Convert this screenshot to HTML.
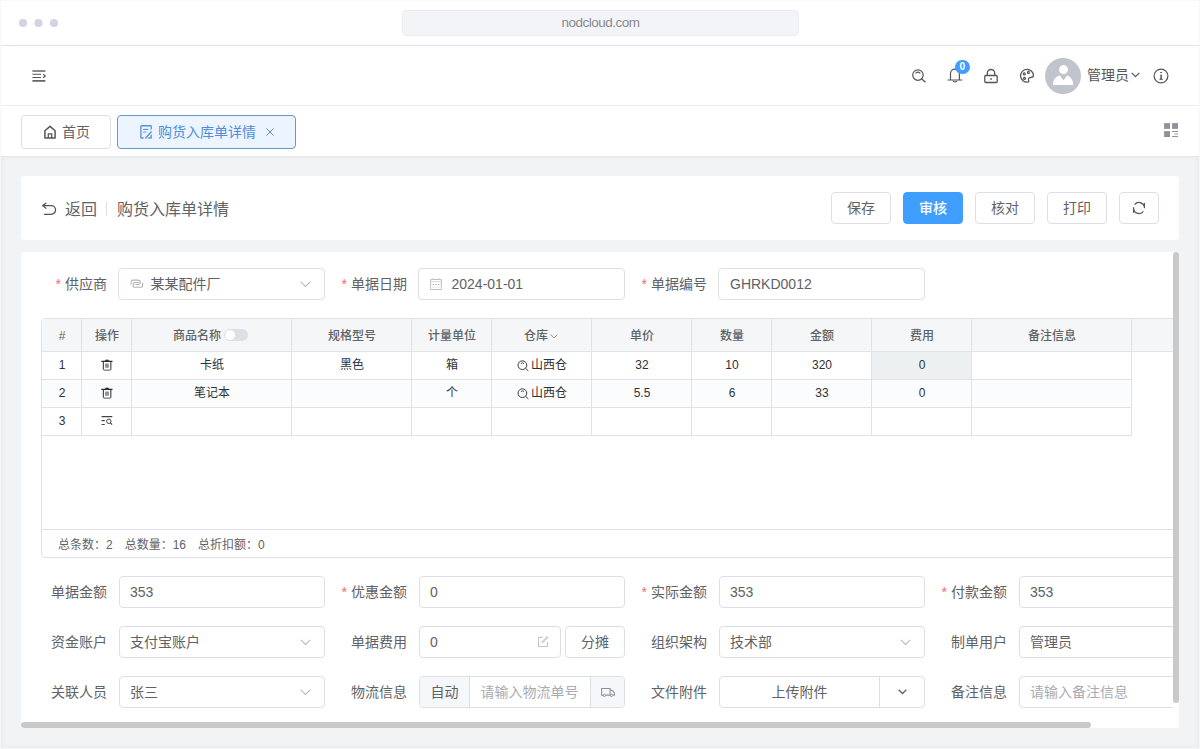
<!DOCTYPE html>
<html lang="zh-CN">
<head>
<meta charset="utf-8">
<title>nodcloud</title>
<style>
*{box-sizing:border-box;margin:0;padding:0}
html,body{width:1200px;height:749px;overflow:hidden}
body{font-family:"Liberation Sans","Noto Sans CJK SC",sans-serif;font-size:14px;color:#606266;background:#f1f3f5;position:relative}
.abs{position:absolute}
#chrome{left:0;top:0;width:1200px;height:46px;background:#fff;border-bottom:1px solid #dfe2e8}
.dot{position:absolute;top:18.8px;width:8.4px;height:8.4px;border-radius:50%;background:#d3d4e3}
#url{left:402px;top:10px;width:397px;height:26px;background:#f2f4f8;border:1px solid #eceef3;border-radius:4px;text-align:center;line-height:24px;font-size:13.5px;letter-spacing:-0.5px;color:#8a8a8a}
#header{left:0;top:46px;width:1200px;height:60px;background:#fff;border-bottom:1px solid #ebeef5}
#tabs{left:0;top:106px;width:1200px;height:50px;background:#fff;box-shadow:0 1px 2px rgba(0,21,41,.03)}
.tab{position:absolute;top:9px;height:34px;border:1px solid #dcdfe6;border-radius:4px;font-size:14px;line-height:32px;color:#606266;background:#fff;white-space:nowrap}
.tab.on{border-color:#6a97cb;background:#ecf4ff;color:#4f8ddb}
.card{position:absolute;background:#fff;border-radius:4px}
.btn{position:absolute;height:32px;width:60px;border:1px solid #dcdfe6;border-radius:4px;background:#fff;color:#606266;font-size:14px;line-height:30px;text-align:center;white-space:nowrap}
.btn.pri{background:#409eff;border-color:#409eff;color:#fff;font-weight:500}
.lbl{position:absolute;height:32px;line-height:32px;font-size:14px;color:#606266;text-align:right;white-space:nowrap}
.lbl i{color:#f56c6c;font-style:normal;margin-right:4px}
.inp{position:absolute;height:32px;border:1px solid #dcdfe6;border-radius:4px;background:#fff;font-size:14px;color:#606266;line-height:30px;padding-left:11px;white-space:nowrap;overflow:hidden}
.ph{color:#a8abb2}
svg{display:block;overflow:visible}
.th,.td{position:absolute;border-right:1px solid #dfe2e6;border-bottom:1px solid #dfe2e6;text-align:center;font-size:12px;white-space:nowrap}
.th{height:33px;line-height:35px;color:#606266;font-weight:500;background:#f4f6f7;padding-left:1px}
.td{height:28px;line-height:27px;color:#303133;padding-left:1px}
</style>
</head>
<body>
<div id="chrome" class="abs">
<svg class="abs" style="left:0;top:0" width="80" height="46" viewBox="0 0 80 46"><circle cx="23" cy="23" r="4.1" fill="#d3d4e3"/><circle cx="38.5" cy="23" r="4.1" fill="#d3d4e3"/><circle cx="54" cy="23" r="4.1" fill="#d3d4e3"/></svg>
<div id="url" class="abs">nodcloud.com</div>
</div>
<div id="header" class="abs">
<svg class="abs" style="left:32px;top:24px" width="14" height="12" viewBox="0 0 14 12" fill="none" ><path d="M0.4 1H13.4M0.4 10.95H13.4" stroke="#63666b" stroke-width="1.7"/><path d="M0.4 4.3H9M0.4 7.45H9" stroke="#555" stroke-width="1.1"/><path d="M11 4.1L13.3 5.9L11 7.7" stroke="#555" stroke-width="1.2"/></svg>
<svg class="abs" style="left:911px;top:22px" width="16" height="16" viewBox="0 0 16 16" fill="none" ><circle cx="6.95" cy="7.05" r="5.25" stroke="#555" stroke-width="1.2"/><path d="M10.8 10.9L14.2 13.9" stroke="#555" stroke-width="1.3" stroke-linecap="round"/><path d="M4.9 5.2A2.9 2.9 0 0 1 9 5.2" stroke="#555" stroke-width="1.1" stroke-linecap="round"/></svg>
<svg class="abs" style="left:947px;top:21.5px" width="16" height="16" viewBox="0 0 16 16" fill="none" ><path d="M3.5 12V5.5A4.45 4.45 0 0 1 12.4 5.5V12" stroke="#555" stroke-width="1.2"/><path d="M1 12H14.9" stroke="#555" stroke-width="1.1" stroke-linecap="round"/><path d="M6.2 13.1Q8 14.9 9.8 13.1" stroke="#555" stroke-width="1.1" stroke-linecap="round"/></svg>
<span class="abs" style="left:955px;top:13.700000000000003px;width:14.6px;height:14.6px;border-radius:50%;background:#409eff;color:#fff;font-size:10px;font-weight:bold;line-height:14.6px;text-align:center">0</span>
<svg class="abs" style="left:983px;top:21.5px" width="16" height="16" viewBox="0 0 16 16" fill="none" ><rect x="1.8" y="7.5" width="12.4" height="7" rx="0.9" stroke="#555" stroke-width="1.3"/><path d="M4.3 7.5V5.2A3.7 3.7 0 0 1 11.7 5.2V7.5" stroke="#555" stroke-width="1.3"/><path d="M8 10V12" stroke="#555" stroke-width="1.3"/></svg>
<svg class="abs" style="left:1019px;top:22px" width="16" height="16" viewBox="0 0 16 16" fill="none" ><path d="M8.9 14.15A6.45 6.45 0 1 1 14.45 7.7C14.6 9.1 12.6 9.2 11 9.6C9.6 9.95 9.2 11 9.6 12.3C9.9 13.3 9.7 14 8.9 14.15Z" stroke="#555" stroke-width="1.25" stroke-linejoin="round"/><circle cx="5.3" cy="5.9" r="1" stroke="#555" stroke-width="1.1"/><circle cx="9.4" cy="4.4" r="1" stroke="#555" stroke-width="1.1"/><circle cx="5.5" cy="10.4" r="1" stroke="#555" stroke-width="1.1"/></svg>
<span class="abs" style="left:1045px;top:12px;width:36px;height:36px;border-radius:50%;background:#c0c4cc"></span>
<svg class="abs" style="left:1045px;top:12px" width="36" height="36" viewBox="0 0 36 36" fill="none" ><circle cx="18.5" cy="11.6" r="4.5" fill="#fff"/><path d="M8 27C8 22 10.5 18.5 14.8 17.5L18.5 22.4L22 17.5C25.7 18.5 28.2 22 28.2 27Z" fill="#fff"/></svg>
<span class="abs" style="left:1087px;top:18px;font-size:14px;line-height:22px;color:#555">管理员</span>
<svg class="abs" style="left:1131.3px;top:26.200000000000003px" width="9" height="6" viewBox="0 0 9 6" fill="none" ><path d="M0.7 0.9L4.5 4.6L8.3 0.9" stroke="#555" stroke-width="1.2"/></svg>
<svg class="abs" style="left:1153px;top:21.799999999999997px" width="16" height="16" viewBox="0 0 16 16" fill="none" ><circle cx="8" cy="8" r="6.9" stroke="#555" stroke-width="1.2"/><path d="M7.2 4.5H9" stroke="#555" stroke-width="1"/><path d="M8.1 6.4V11.2" stroke="#555" stroke-width="1.5"/><path d="M6.5 11.3H9.7" stroke="#555" stroke-width="1.1"/></svg>
</div>
<div class="card" style="left:21px;top:176px;width:1158px;height:64px">
<svg class="abs" style="left:21px;top:27px" width="15" height="13" viewBox="0 0 15 13" fill="none" ><path d="M3.9 0.2L0.8 2.6L3.9 5.2" stroke="#555" stroke-width="1.3" stroke-linecap="round"/><path d="M0.9 2.6H9.2A4.35 4.35 0 0 1 9.2 11.3H2.4" stroke="#555" stroke-width="1.3" stroke-linecap="round"/></svg>
<span class="abs" style="left:44px;top:22px;font-size:16px;line-height:24px">返回</span>
<span class="abs" style="left:85px;top:25.5px;width:1px;height:14px;background:#dcdfe6"></span>
<span class="abs" style="left:96px;top:22px;font-size:16px;line-height:24px">购货入库单详情</span>
<div class="btn" style="left:810px;top:16px">保存</div>
<div class="btn pri" style="left:882px;top:16px">审核</div>
<div class="btn" style="left:954px;top:16px">核对</div>
<div class="btn" style="left:1026px;top:16px">打印</div>
<div class="btn" style="left:1098px;top:16px;width:40px"><svg class="abs" style="left:12px;top:8px" width="14" height="14" viewBox="0 0 14 14" fill="none" ><path d="M2.6 3.6A5.6 5.6 0 0 1 12.4 5.6" stroke="#555" stroke-width="1.2"/><path d="M12.4 1.9V7.3" stroke="#555" stroke-width="1.2"/><path d="M11.4 10.4A5.6 5.6 0 0 1 1.6 8.4" stroke="#555" stroke-width="1.2"/><path d="M1.6 6.3V11.8" stroke="#555" stroke-width="1.2"/></svg></div>
</div>
<div class="card" style="left:21px;top:252px;width:1158px;height:476px;overflow:hidden;border-radius:4px 0 0 3px">
<div class="lbl" style="right:1072px;top:16px"><i>*</i>供应商</div>
<div class="inp" style="left:97px;top:16px;width:207px;padding-left:11px;"><svg class="abs" style="left:11px;top:10px" width="14" height="10" viewBox="0 0 14 10" fill="none" ><path d="M1.1 5.5V3.1A2 2 0 0 1 3.1 1.1H8A2.2 2.2 0 0 1 8 5.5H5.5" stroke="#b1b4bb" stroke-width="1.1"/><path d="M12.7 4V6.3A2 2 0 0 1 10.7 8.3H5.4A2.4 2.4 0 0 1 5.4 3.5H8.7" stroke="#b1b4bb" stroke-width="1.1"/></svg><span class="abs" style="left:31.5px">某某配件厂</span><svg class="abs" style="right:13.2px;top:11.8px" width="11" height="6" viewBox="0 0 11 6" fill="none" ><path d="M0.8 0.8L5.5 5.4L10.2 0.8" stroke="#b7babf" stroke-width="1.1"/></svg></div>
<div class="lbl" style="right:772px;top:16px"><i>*</i>单据日期</div>
<div class="inp" style="left:397px;top:16px;width:207px;padding-left:11px;"><svg class="abs" style="left:11px;top:8px" width="12" height="13" viewBox="0 0 12 13" fill="none" ><rect x="0.6" y="2.5" width="10.8" height="10" rx="0.3" stroke="#bcbfc6" stroke-width="1"/><path d="M0.6 4.7H11.4" stroke="#d0d3d9" stroke-width="1"/><path d="M2.8 1.3V2.5M9.2 1.3V2.5" stroke="#c9ccd2" stroke-width="1.1"/><path d="M2.6 7.5H4M5.3 7.5H6.7M8 7.5H9.4" stroke="#b0b3ba" stroke-width="1"/><path d="M2.6 10.2H4M5.3 10.2H6.7M8 10.2H9.4" stroke="#d9dbe0" stroke-width="1"/></svg><span class="abs" style="left:32.5px">2024-01-01</span></div>
<div class="lbl" style="right:472px;top:16px"><i>*</i>单据编号</div>
<div class="inp" style="left:697px;top:16px;width:207px;padding-left:11px;">GHRKD0012</div>
<div class="abs" style="left:20px;top:66px;width:1200px;height:240px;border:1px solid #dfe2e6;border-radius:4px"></div>
<div class="abs" style="left:21px;top:67px;width:1200px;height:33px;background:#f4f6f7;border-bottom:1px solid #dfe2e6;border-top-left-radius:3px"></div>
<div class="th" style="left:21px;top:67px;width:40px">#</div>
<div class="th" style="left:61px;top:67px;width:50px">操作</div>
<div class="th" style="left:111px;top:67px;width:160px"><span style="position:relative;left:-15px">商品名称</span><span class="abs" style="left:92px;top:10px;width:24px;height:12px;border-radius:6px;background:#dcdfe6"><span class="abs" style="left:1px;top:1px;width:10px;height:10px;border-radius:50%;background:#fff"></span></span></div>
<div class="th" style="left:271px;top:67px;width:120px">规格型号</div>
<div class="th" style="left:391px;top:67px;width:80px">计量单位</div>
<div class="th" style="left:471px;top:67px;width:100px"><span style="position:relative;left:-6px">仓库</span><svg class="abs" style="left:58.3px;top:14.8px" width="8" height="5" viewBox="0 0 8 5" fill="none" ><path d="M0.6 0.6L4 3.8L7.4 0.6" stroke="#909399" stroke-width="1"/></svg></div>
<div class="th" style="left:571px;top:67px;width:100px">单价</div>
<div class="th" style="left:671px;top:67px;width:80px">数量</div>
<div class="th" style="left:751px;top:67px;width:100px">金额</div>
<div class="th" style="left:851px;top:67px;width:100px">费用</div>
<div class="th" style="left:951px;top:67px;width:160px">备注信息</div>
<div class="td" style="left:21px;top:100px;width:40px;">1</div>
<div class="td" style="left:61px;top:100px;width:50px;"><svg class="abs" style="left:19px;top:7px" width="12" height="12" viewBox="0 0 12 12" fill="none" ><path d="M0.3 2.4H11.5" stroke="#2b2b2b" stroke-width="1.2"/><path d="M4.4 2.2V1.5H7.6V2.2" stroke="#2b2b2b" stroke-width="1"/><path d="M4.6 0.6H7.4" stroke="#a0a0a0" stroke-width="0.9"/><path d="M2.35 2.6V10.4" stroke="#3a3a3a" stroke-width="1.1"/><path d="M9.85 2.6V10.4" stroke="#3a3a3a" stroke-width="1.1"/><path d="M2.35 10.2Q2.35 11.1 3.3 11.1H8.9Q9.85 11.1 9.85 10.2" stroke="#777" stroke-width="1.1"/><rect x="4.1" y="4.4" width="3.8" height="4.4" rx="0.4" fill="#909090"/></svg></div>
<div class="td" style="left:111px;top:100px;width:160px;">卡纸</div>
<div class="td" style="left:271px;top:100px;width:120px;">黑色</div>
<div class="td" style="left:391px;top:100px;width:80px;">箱</div>
<div class="td" style="left:471px;top:100px;width:100px;"><span style="position:relative;left:7px">山西仓</span><svg class="abs" style="left:24.5px;top:8px" width="12" height="12" viewBox="0 0 12 12" fill="none" ><circle cx="5.4" cy="5.2" r="4.35" stroke="#3a3a3a" stroke-width="1"/><path d="M8.5 8.3L11.3 10.8" stroke="#3a3a3a" stroke-width="1"/><path d="M3.8 3.6A2.4 2.4 0 0 1 7 3.5" stroke="#3a3a3a" stroke-width="0.9"/></svg></div>
<div class="td" style="left:571px;top:100px;width:100px;">32</div>
<div class="td" style="left:671px;top:100px;width:80px;">10</div>
<div class="td" style="left:751px;top:100px;width:100px;">320</div>
<div class="td" style="left:851px;top:100px;width:100px;background:#ecf0f1;">0</div>
<div class="td" style="left:951px;top:100px;width:160px;"></div>
<div class="td" style="left:21px;top:128px;width:40px;background:#fbfcfd;">2</div>
<div class="td" style="left:61px;top:128px;width:50px;background:#fbfcfd;"><svg class="abs" style="left:19px;top:7px" width="12" height="12" viewBox="0 0 12 12" fill="none" ><path d="M0.3 2.4H11.5" stroke="#2b2b2b" stroke-width="1.2"/><path d="M4.4 2.2V1.5H7.6V2.2" stroke="#2b2b2b" stroke-width="1"/><path d="M4.6 0.6H7.4" stroke="#a0a0a0" stroke-width="0.9"/><path d="M2.35 2.6V10.4" stroke="#3a3a3a" stroke-width="1.1"/><path d="M9.85 2.6V10.4" stroke="#3a3a3a" stroke-width="1.1"/><path d="M2.35 10.2Q2.35 11.1 3.3 11.1H8.9Q9.85 11.1 9.85 10.2" stroke="#777" stroke-width="1.1"/><rect x="4.1" y="4.4" width="3.8" height="4.4" rx="0.4" fill="#909090"/></svg></div>
<div class="td" style="left:111px;top:128px;width:160px;background:#fbfcfd;">笔记本</div>
<div class="td" style="left:271px;top:128px;width:120px;background:#fbfcfd;"></div>
<div class="td" style="left:391px;top:128px;width:80px;background:#fbfcfd;">个</div>
<div class="td" style="left:471px;top:128px;width:100px;background:#fbfcfd;"><span style="position:relative;left:7px">山西仓</span><svg class="abs" style="left:24.5px;top:8px" width="12" height="12" viewBox="0 0 12 12" fill="none" ><circle cx="5.4" cy="5.2" r="4.35" stroke="#3a3a3a" stroke-width="1"/><path d="M8.5 8.3L11.3 10.8" stroke="#3a3a3a" stroke-width="1"/><path d="M3.8 3.6A2.4 2.4 0 0 1 7 3.5" stroke="#3a3a3a" stroke-width="0.9"/></svg></div>
<div class="td" style="left:571px;top:128px;width:100px;background:#fbfcfd;">5.5</div>
<div class="td" style="left:671px;top:128px;width:80px;background:#fbfcfd;">6</div>
<div class="td" style="left:751px;top:128px;width:100px;background:#fbfcfd;">33</div>
<div class="td" style="left:851px;top:128px;width:100px;background:#fbfcfd;">0</div>
<div class="td" style="left:951px;top:128px;width:160px;background:#fbfcfd;"></div>
<div class="td" style="left:21px;top:156px;width:40px;">3</div>
<div class="td" style="left:61px;top:156px;width:50px;"><svg class="abs" style="left:19px;top:8px" width="12" height="10" viewBox="0 0 12 10" fill="none" ><path d="M0.6 0.6H11.3" stroke="#444" stroke-width="1.1"/><path d="M0.6 4.6H3.8M0.6 8.55H3.8" stroke="#444" stroke-width="1.1"/><circle cx="7.8" cy="5.3" r="2.2" stroke="#444" stroke-width="1"/><path d="M9.4 6.9L11.1 8.6" stroke="#444" stroke-width="1.2"/></svg></div>
<div class="td" style="left:111px;top:156px;width:160px;"></div>
<div class="td" style="left:271px;top:156px;width:120px;"></div>
<div class="td" style="left:391px;top:156px;width:80px;"></div>
<div class="td" style="left:471px;top:156px;width:100px;"></div>
<div class="td" style="left:571px;top:156px;width:100px;"></div>
<div class="td" style="left:671px;top:156px;width:80px;"></div>
<div class="td" style="left:751px;top:156px;width:100px;"></div>
<div class="td" style="left:851px;top:156px;width:100px;"></div>
<div class="td" style="left:951px;top:156px;width:160px;"></div>
<div class="abs" style="left:21px;top:277px;width:1200px;height:1px;background:#dfe2e6"></div>
<div class="abs" style="left:37px;top:279.5px;height:27px;line-height:27px;font-size:12px;color:#606266;white-space:nowrap"><span style="margin-right:12px">总条数：2</span><span style="margin-right:12px">总数量：16</span><span>总折扣额：0</span></div>
<div class="lbl" style="right:1072px;top:324px">单据金额</div>
<div class="inp" style="left:98px;top:324px;width:206px;padding-left:10px;">353</div>
<div class="lbl" style="right:772px;top:324px"><i>*</i>优惠金额</div>
<div class="inp" style="left:398px;top:324px;width:206px;padding-left:10px;">0</div>
<div class="lbl" style="right:472px;top:324px"><i>*</i>实际金额</div>
<div class="inp" style="left:698px;top:324px;width:206px;padding-left:10px;">353</div>
<div class="lbl" style="right:172px;top:324px"><i>*</i>付款金额</div>
<div class="inp" style="left:998px;top:324px;width:206px;padding-left:10px;">353</div>
<div class="lbl" style="right:1072px;top:374px">资金账户</div>
<div class="inp" style="left:98px;top:374px;width:206px;padding-left:10px;">支付宝账户<svg class="abs" style="right:13.2px;top:11.8px" width="11" height="6" viewBox="0 0 11 6" fill="none" ><path d="M0.8 0.8L5.5 5.4L10.2 0.8" stroke="#b7babf" stroke-width="1.1"/></svg></div>
<div class="lbl" style="right:772px;top:374px">单据费用</div>
<div class="inp" style="left:398px;top:374px;width:142px;padding-left:10px;">0<svg class="abs" style="left:118px;top:9px" width="12" height="12" viewBox="0 0 12 12" fill="none" ><path d="M4.8 1.4H0.5V10.5H9.6V6" stroke="#c3c6cd" stroke-width="1.1"/><path d="M3.8 6.7L9.9 0.8" stroke="#c9ccd2" stroke-width="2.1"/><path d="M4.6 5.9L9.3 1.4" stroke="#f2f3f5" stroke-width="0.7" stroke-dasharray="0.9 0.7"/></svg></div>
<div class="btn" style="left:544px;top:374px">分摊</div>
<div class="lbl" style="right:472px;top:374px">组织架构</div>
<div class="inp" style="left:698px;top:374px;width:206px;padding-left:10px;">技术部<svg class="abs" style="right:13.2px;top:11.8px" width="11" height="6" viewBox="0 0 11 6" fill="none" ><path d="M0.8 0.8L5.5 5.4L10.2 0.8" stroke="#b7babf" stroke-width="1.1"/></svg></div>
<div class="lbl" style="right:172px;top:374px">制单用户</div>
<div class="inp" style="left:998px;top:374px;width:206px;padding-left:10px;">管理员</div>
<div class="lbl" style="right:1072px;top:424px">关联人员</div>
<div class="inp" style="left:98px;top:424px;width:206px;padding-left:10px;">张三<svg class="abs" style="right:13.2px;top:11.8px" width="11" height="6" viewBox="0 0 11 6" fill="none" ><path d="M0.8 0.8L5.5 5.4L10.2 0.8" stroke="#b7babf" stroke-width="1.1"/></svg></div>
<div class="lbl" style="right:772px;top:424px">物流信息</div>
<div class="abs" style="left:398px;top:424px;width:206px;height:32px;border:1px solid #dcdfe6;border-radius:4px;background:#fff;overflow:hidden;font-size:14px;line-height:30px;white-space:nowrap"><span class="abs" style="left:0;top:0;width:50px;height:30px;background:#f5f7fa;border-right:1px solid #dcdfe6;text-align:center">自动</span><span class="abs ph" style="left:60.5px;top:0">请输入物流单号</span><span class="abs" style="left:170px;top:0;width:34px;height:30px;background:#f5f7fa;border-left:1px solid #dcdfe6"><svg class="abs" style="left:9px;top:10px" width="16" height="11" viewBox="0 0 16 11" fill="none" ><path d="M3 8.1H1.6V1.5H10.1V8.1H5.8" stroke="#8f9299" stroke-width="1.1"/><path d="M10.1 3.4H12.3L14.4 5.8V8.1H12.9" stroke="#8f9299" stroke-width="1.1" stroke-linejoin="round"/><circle cx="4.4" cy="8.4" r="1.15" stroke="#8f9299" stroke-width="1" fill="#f5f7fa"/><circle cx="11.5" cy="8.4" r="1.15" stroke="#8f9299" stroke-width="1" fill="#f5f7fa"/></svg></span></div>
<div class="lbl" style="right:472px;top:424px">文件附件</div>
<div class="abs" style="left:698px;top:424px;width:206px;height:32px;border:1px solid #dcdfe6;border-radius:4px;background:#fff;overflow:hidden;font-size:14px;line-height:30px;white-space:nowrap"><span class="abs" style="left:0;top:0;width:160px;height:30px;border-right:1px solid #dcdfe6;text-align:center">上传附件</span><svg class="abs" style="left:177.5px;top:12.1px" width="9" height="6" viewBox="0 0 9 6" fill="none" ><path d="M0.7 0.8L4.5 4.5L8.3 0.8" stroke="#606266" stroke-width="1.3"/></svg></div>
<div class="lbl" style="right:172px;top:424px">备注信息</div>
<div class="inp" style="left:998px;top:424px;width:206px;padding-left:10px;"><span class="ph">请输入备注信息</span></div>
<div class="abs" style="left:1152px;top:0;width:6px;height:476px;background:#fff"></div>
<div class="abs" style="left:1152px;top:0;width:6px;height:451px;border-radius:3px;background:#c9c9c9"></div>
<div class="abs" style="left:0;top:470px;width:1070px;height:6px;border-radius:3px;background:#c9c9c9"></div>
</div>
<div id="tabs" class="abs">
<div class="tab" style="left:21px;width:90px"><svg class="abs" style="left:20.7px;top:9px" width="14" height="15" viewBox="0 0 14 15" fill="none" ><path d="M1.9 13V5.8L7 1.4L12.1 5.8V13H1.9Z" stroke="#555" stroke-width="1.5" stroke-linejoin="round"/><path d="M5.3 13V8.8H8.7V13" stroke="#555" stroke-width="1.3"/></svg><span class="abs" style="left:40px;top:0">首页</span></div>
<div class="tab on" style="left:117px;width:179px"><svg class="abs" style="left:22px;top:9px" width="13" height="15" viewBox="0 0 13 15" fill="none" ><path d="M11.2 4.6V1.3Q11.2 0.75 10.6 0.75H1.5Q0.9 0.75 0.9 1.3V12.4Q0.9 13 1.5 13H3.6M8.3 13H10.6Q11.2 13 11.2 12.4V9.7" stroke="#5790d6" stroke-width="1.3"/><path d="M3.1 4.4H8.3" stroke="#5790d6" stroke-width="1.1"/><path d="M3.1 7H6.3" stroke="#86b0e6" stroke-width="1.4"/><path d="M5.4 13.5L11.5 6.5" stroke="#5790d6" stroke-width="1.3"/></svg><span class="abs" style="left:40px;top:0">购货入库单详情</span><svg class="abs" style="left:148px;top:11.9px" width="8" height="8" viewBox="0 0 8 8" fill="none" ><path d="M0.5 0.5L7.5 7.5M7.5 0.5L0.5 7.5" stroke="#5a8fd2" stroke-width="1"/></svg></div>
<svg class="abs" style="left:1164px;top:17px" width="15" height="15" viewBox="0 0 15 15" fill="none" ><rect x="0.1" y="0.1" width="5.9" height="5.8" fill="#8f9299"/><rect x="8.1" y="0.1" width="5.9" height="5.8" fill="#8f9299"/><rect x="0.1" y="8.1" width="5.9" height="5.9" fill="#8f9299"/><path d="M8.1 8.5H14M8.1 13.5H14" stroke="#8f9299" stroke-width="1"/><path d="M10.4 11H14" stroke="#b0b3b8" stroke-width="1.3"/></svg>
</div>
<div class="abs" style="left:1px;top:156px;width:1198px;height:592px;box-shadow:inset 0 0 6px rgba(0,10,30,.055)"></div><div class="abs" style="left:0;top:0;width:1px;height:749px;background:#f7f7f9"></div><div class="abs" style="left:1199px;top:0;width:1px;height:749px;background:#f7f7f9"></div><div class="abs" style="left:0;top:748px;width:1200px;height:1px;background:#f7f7f9"></div><div class="abs" style="left:0;top:0;width:1200px;height:1px;background:#f7f7f9"></div>
</body>
</html>
